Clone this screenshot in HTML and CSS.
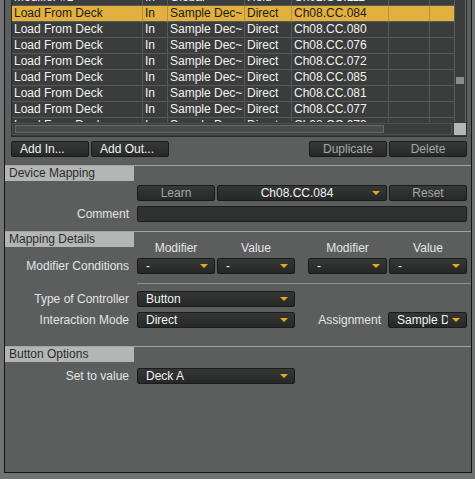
FILE: index.html
```html
<!DOCTYPE html>
<html lang="en">
<head>
    <meta charset="UTF-8">
    <meta name="viewport" content="width=device-width, initial-scale=1.0">
    <title>Controller Manager</title>
    <link rel="stylesheet" href="styles.css">
</head>
<body>

    <div class="frame">

        <!-- Mapping list -->
        <div class="table-box">
            <div class="table-main">
                <div class="rows-view">
                    <div class="rows">
                        <div class="trow">
                            <div class="cell c1">Modifier #1</div><div class="cell c2">In</div><div class="cell c3">Global</div><div class="cell c4">Hold</div><div class="cell c5">Ch02.CC.111</div><div class="cell c6"></div><div class="cell c7"></div>
                        </div>
                        <div class="trow sel">
                            <div class="cell c1">Load From Deck</div><div class="cell c2">In</div><div class="cell c3">Sample Dec~</div><div class="cell c4">Direct</div><div class="cell c5">Ch08.CC.084</div><div class="cell c6"></div><div class="cell c7"></div>
                        </div>
                        <div class="trow">
                            <div class="cell c1">Load From Deck</div><div class="cell c2">In</div><div class="cell c3">Sample Dec~</div><div class="cell c4">Direct</div><div class="cell c5">Ch08.CC.080</div><div class="cell c6"></div><div class="cell c7"></div>
                        </div>
                        <div class="trow">
                            <div class="cell c1">Load From Deck</div><div class="cell c2">In</div><div class="cell c3">Sample Dec~</div><div class="cell c4">Direct</div><div class="cell c5">Ch08.CC.076</div><div class="cell c6"></div><div class="cell c7"></div>
                        </div>
                        <div class="trow">
                            <div class="cell c1">Load From Deck</div><div class="cell c2">In</div><div class="cell c3">Sample Dec~</div><div class="cell c4">Direct</div><div class="cell c5">Ch08.CC.072</div><div class="cell c6"></div><div class="cell c7"></div>
                        </div>
                        <div class="trow">
                            <div class="cell c1">Load From Deck</div><div class="cell c2">In</div><div class="cell c3">Sample Dec~</div><div class="cell c4">Direct</div><div class="cell c5">Ch08.CC.085</div><div class="cell c6"></div><div class="cell c7"></div>
                        </div>
                        <div class="trow">
                            <div class="cell c1">Load From Deck</div><div class="cell c2">In</div><div class="cell c3">Sample Dec~</div><div class="cell c4">Direct</div><div class="cell c5">Ch08.CC.081</div><div class="cell c6"></div><div class="cell c7"></div>
                        </div>
                        <div class="trow">
                            <div class="cell c1">Load From Deck</div><div class="cell c2">In</div><div class="cell c3">Sample Dec~</div><div class="cell c4">Direct</div><div class="cell c5">Ch08.CC.077</div><div class="cell c6"></div><div class="cell c7"></div>
                        </div>
                        <div class="trow">
                            <div class="cell c1">Load From Deck</div><div class="cell c2">In</div><div class="cell c3">Sample Dec~</div><div class="cell c4">Direct</div><div class="cell c5">Ch08.CC.073</div><div class="cell c6"></div><div class="cell c7"></div>
                        </div>
                    </div>
                </div>
                <div class="vscroll"><div class="vthumb"></div></div>
            </div>
            <div class="table-foot">
                <div class="hscroll"><div class="hthumb"></div></div>
                <div class="corner"></div>
            </div>
        </div>

        <!-- List buttons -->
        <div class="list-buttons">
            <button class="btn">Add In...</button>
            <button class="btn">Add Out...</button>
            <span class="spacer"></span>
            <button class="btn btn-dim">Duplicate</button>
            <button class="btn btn-dim">Delete</button>
        </div>

        <!-- Device Mapping -->
        <div class="section-head head-device">
            <div class="section-title">Device Mapping</div>
        </div>
        <div class="row row-learn">
            <div class="label"></div>
            <button class="btn btn-dim w78">Learn</button>
            <div class="dd dd-center w170"><span class="dd-text">Ch08.CC.084</span><span class="arrow"></span></div>
            <button class="btn btn-dim w78">Reset</button>
        </div>
        <div class="row row-comment">
            <div class="label">Comment</div>
            <div class="field"></div>
        </div>

        <!-- Mapping Details -->
        <div class="section-head head-details">
            <div class="section-title">Mapping Details</div>
            <div class="col-labels">
                <span class="w78">Modifier</span>
                <span class="w78">Value</span>
                <span class="w79 gap-left">Modifier</span>
                <span class="w78">Value</span>
            </div>
        </div>
        <div class="row row-mod">
            <div class="label">Modifier Conditions</div>
            <div class="dd w78"><span class="dd-text">-</span><span class="arrow"></span></div>
            <div class="dd w78"><span class="dd-text">-</span><span class="arrow"></span></div>
            <div class="dd w79 gap-left"><span class="dd-text">-</span><span class="arrow"></span></div>
            <div class="dd w78"><span class="dd-text">-</span><span class="arrow"></span></div>
        </div>
        <div class="separator"></div>
        <div class="row row-type">
            <div class="label">Type of Controller</div>
            <div class="dd w158"><span class="dd-text">Button</span><span class="arrow"></span></div>
        </div>
        <div class="row row-mode">
            <div class="label">Interaction Mode</div>
            <div class="dd w158"><span class="dd-text">Direct</span><span class="arrow"></span></div>
            <div class="assign-label">Assignment</div>
            <div class="dd w79"><span class="dd-text">Sample D</span><span class="arrow"></span></div>
        </div>

        <!-- Button Options -->
        <div class="section-head head-options">
            <div class="section-title">Button Options</div>
        </div>
        <div class="row row-set">
            <div class="label">Set to value</div>
            <div class="dd w158"><span class="dd-text">Deck A</span><span class="arrow"></span></div>
        </div>

    </div>

</body>
</html>
```

FILE: styles.css
```css
body {
    margin: 0;
    background-color: #717373;
    font-family: "Liberation Sans", Arial, sans-serif;
    font-size: 12px;
}
.frame {
    margin-left: 4px;
    width: 468px;
    height: 473px;
    box-sizing: border-box;
    border: 1px solid #141515;
    border-top: none;
    background-color: #5c5e5e;
    overflow: hidden;
}

/* mapping list */
.table-box {
    margin-left: 6px;
    width: 456px;
    box-sizing: border-box;
    border: 1px solid #2a2c2c;
    border-top: none;
    background-color: #3b3d3d;
}
.table-main {
    display: flex;
}
.rows-view {
    width: 443px;
    height: 122px;
    box-sizing: border-box;
    border-right: 1px solid #5a5c5c;
    overflow: hidden;
}
.rows {
    margin-top: -10px;
}
.trow {
    display: flex;
    height: 16px;
}
.cell {
    box-sizing: border-box;
    height: 16px;
    padding-left: 2px;
    border-right: 1px solid #575959;
    border-bottom: 1px solid #575959;
    line-height: 15px;
    white-space: nowrap;
    overflow: hidden;
    color: #f2f2f2;
}
.c1 { width: 131px; }
.c2 { width: 25px; }
.c3 { width: 77px; }
.c4 { width: 47px; }
.c5 { width: 97px; }
.c6 { width: 41px; }
.c7 { width: 24px; border-right: none; }
.trow.sel .cell {
    background-color: #e2b03e;
    color: #1c1c1c;
    border-right-color: #bb9134;
}
.vscroll {
    width: 11px;
    height: 122px;
    box-sizing: border-box;
    border-right: 1px solid #676969;
}
.vthumb {
    margin: 77px 0 0 1px;
    width: 8px;
    height: 7px;
    background-color: #8b8d8d;
}
.table-foot {
    display: flex;
    height: 14px;
    padding-top: 1px;
    box-sizing: border-box;
}
.hscroll {
    width: 440px;
    height: 12px;
    box-sizing: border-box;
    border: 1px solid #505252;
    padding: 1px 2px;
}
.hthumb {
    width: 369px;
    height: 100%;
    box-sizing: border-box;
    border: 1px solid #686a6a;
    background-color: #4a4c4c;
}
.corner {
    margin-left: 2px;
    width: 12px;
    height: 12px;
    background-color: #b4b6b6;
}

/* buttons and fields */
.btn {
    box-sizing: border-box;
    width: 78px;
    height: 16px;
    margin: 0;
    padding: 0 0 0 8px;
    border: 1px solid #1a1c1c;
    border-radius: 2px;
    background: linear-gradient(#373939, #272929);
    color: #f2f2f2;
    font: inherit;
    line-height: 14px;
    text-align: left;
}
.btn-dim {
    padding: 0;
    text-align: center;
    color: #a6a8a8;
}
.list-buttons {
    display: flex;
    gap: 2px;
    margin: 4px 0 0 6px;
    width: 456px;
}
.spacer {
    flex: 1;
}
.w78 { width: 78px; }
.w79 { width: 79px; }
.w158 { width: 158px; }
.w170 { width: 170px; }
.gap-left { margin-left: 11px; }

.dd {
    display: flex;
    align-items: center;
    box-sizing: border-box;
    height: 16px;
    padding: 0 6px 0 8px;
    border: 1px solid #1a1c1c;
    border-radius: 2px;
    background: linear-gradient(#353737, #262828);
    color: #f4f4f4;
    white-space: nowrap;
    overflow: hidden;
}
.dd-text {
    flex: 1;
    overflow: hidden;
}
.dd-center .dd-text {
    text-align: center;
}
.arrow {
    flex: none;
    margin-left: 4px;
    width: 0;
    height: 0;
    border-left: 4px solid transparent;
    border-right: 4px solid transparent;
    border-top: 4px solid #eba61f;
}
.field {
    width: 330px;
    height: 16px;
    box-sizing: border-box;
    border: 1px solid #1c1e1e;
    border-radius: 2px;
    background-color: #303232;
}

/* sections */
.section-head {
    display: flex;
    align-items: flex-start;
    border-top: 1px solid #a2a4a4;
}
.section-title {
    width: 129px;
    height: 15px;
    box-sizing: border-box;
    padding-left: 4px;
    background-color: #b4b6b6;
    color: #2a2c2c;
    line-height: 14px;
}
.head-device { margin-top: 8px; }
.head-details { margin-top: 9px; }
.head-options { margin-top: 18px; }
.col-labels {
    display: flex;
    gap: 2px;
    margin: 8px 0 0 3px;
    height: 16px;
    line-height: 16px;
    color: #e4e6e6;
}
.col-labels span {
    text-align: center;
}
.row {
    display: flex;
    align-items: center;
    gap: 2px;
    height: 16px;
    padding-right: 4px;
}
.label {
    width: 124px;
    margin-right: 6px;
    text-align: right;
    color: #e2e4e4;
    white-space: nowrap;
}
.row-learn { margin-top: 4px; }
.row-comment { margin-top: 5px; }
.row-mod { margin-top: 2px; }
.row-type { margin-top: 7px; }
.row-mode { margin-top: 5px; }
.row-set { margin-top: 6px; }
.separator {
    margin: 9px 0 0 132px;
    border-top: 1px solid #8f9191;
}
.assign-label {
    margin-left: auto;
    margin-right: 5px;
    color: #e2e4e4;
}
```
